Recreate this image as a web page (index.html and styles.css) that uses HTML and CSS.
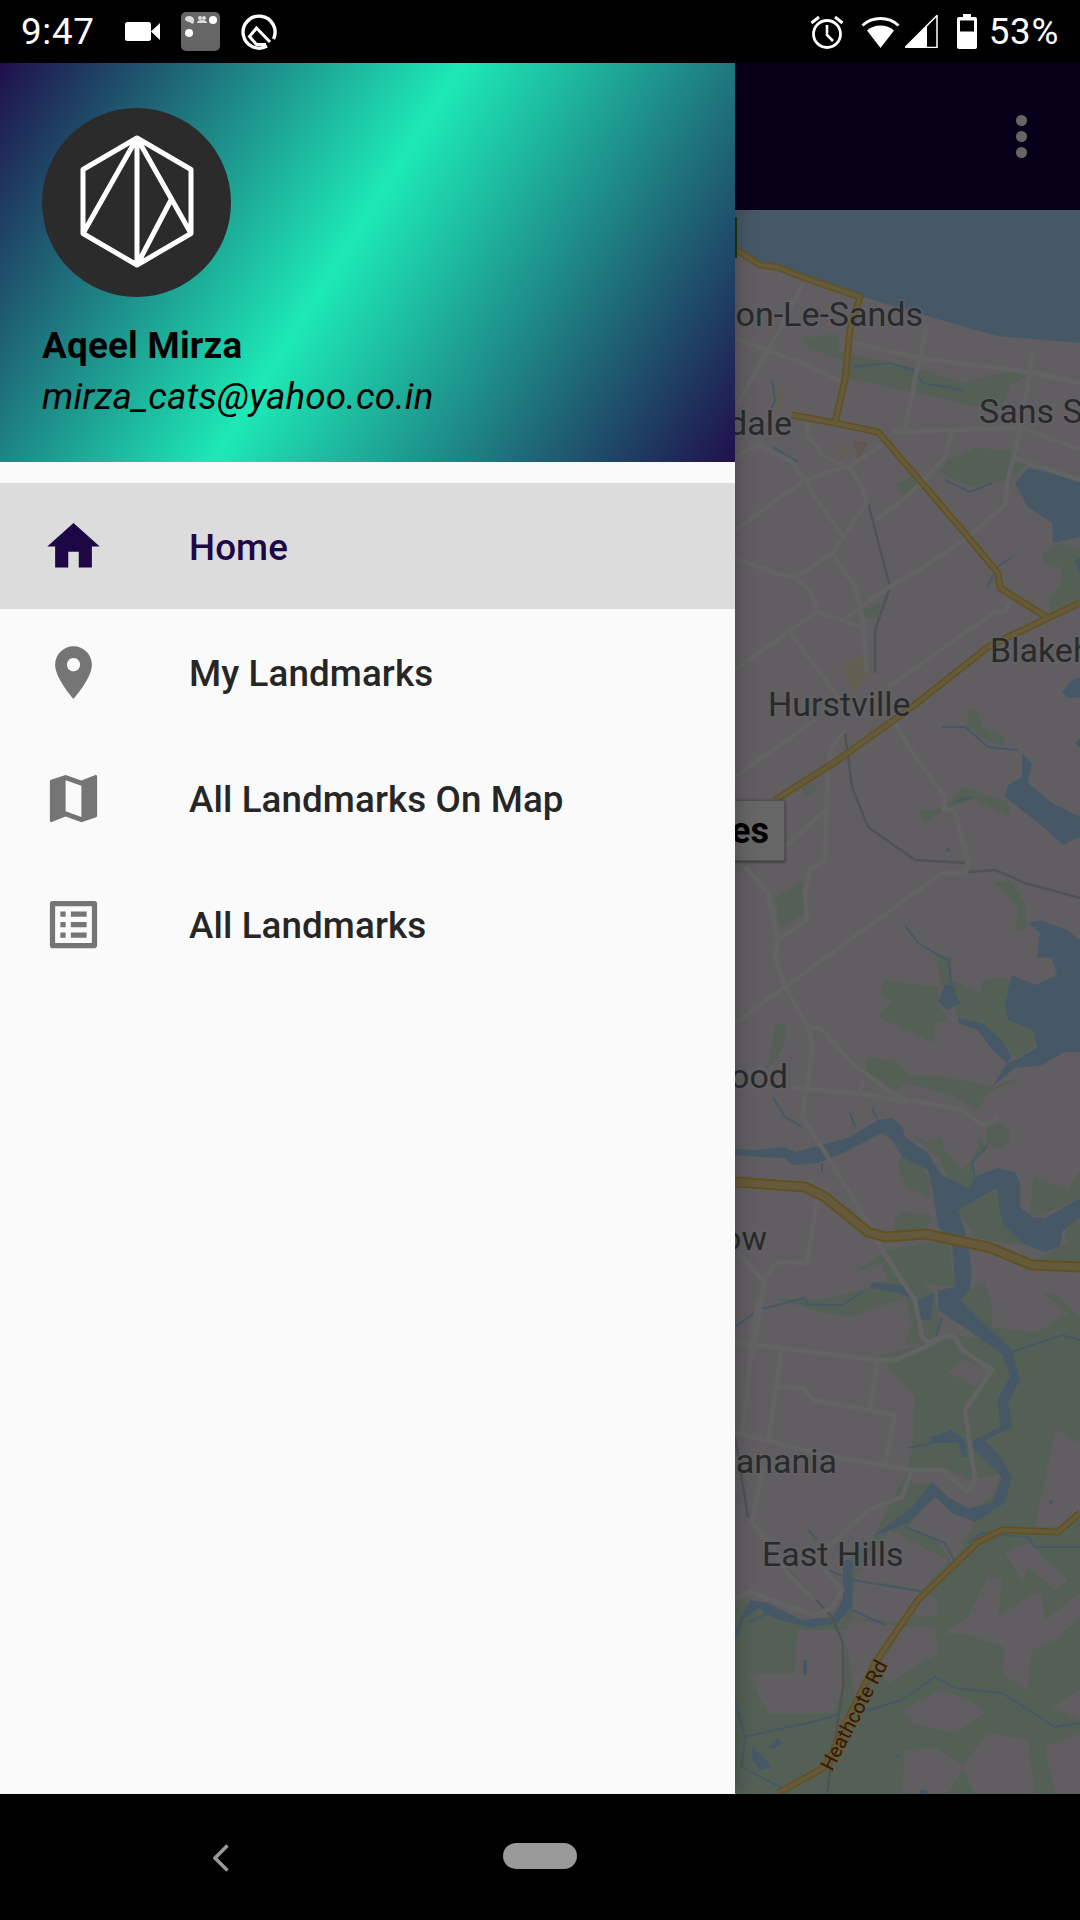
FILE: index.html
```html
<!DOCTYPE html>
<html lang="en">
<head>
    <meta charset="UTF-8">
    <meta name="viewport" content="width=device-width, initial-scale=1.0">
    <title>Landmarks</title>
    <link rel="stylesheet" href="styles.css">
</head>
<body>
    <div class="phone">
        <div class="status-bar">
            <div class="status-left">
                <span class="status-text time">9:47</span>
                <svg class="icon-video" width="36" height="20" viewBox="0 0 36 20">
                    <rect x="0" y="0" width="26" height="19" rx="2.5" fill="#fff"/>
                    <path d="M26 9.5 35 1v17z" fill="#fff"/>
                </svg>
                <svg class="icon-app" width="39" height="39" viewBox="0 0 39 39">
                    <rect width="39" height="39" rx="5" fill="#666"/>
                    <circle cx="32" cy="8" r="4" fill="#fff"/>
                    <circle cx="8" cy="21" r="4" fill="#fff"/>
                    <path d="M4 7c0-2 2-3 4-3s5 1 5 4-1 5-3 3-6-1-6-4z" fill="#ddd"/>
                    <circle cx="19" cy="6" r="2" fill="#ddd"/>
                    <circle cx="23" cy="6" r="2" fill="#ddd"/>
                    <path d="M16 11c0-2 2-3 5-3s5 1 5 3z" fill="#ddd"/>
                </svg>
                <svg class="icon-q" width="36" height="36" viewBox="0 0 36 36">
                    <path d="M26 32A16 16 0 1 1 32.500 25" fill="none" stroke="#fff" stroke-width="3.400"/>
                    <path d="M25 30.500H15.500L8.500 22.500 15.500 14 29 28" fill="none" stroke="#fff" stroke-width="3"/>
                </svg>
            </div>
            <div class="status-right">
                <svg class="icon-alarm" width="34" height="34" viewBox="0 0 34 34">
                    <circle cx="17" cy="19" r="13.5" fill="none" stroke="#fff" stroke-width="2.800"/>
                    <path d="M17 10v10l6 6" fill="none" stroke="#fff" stroke-width="2.600"/>
                    <path d="M9 2 1.500 8M25 2l7.500 6" fill="none" stroke="#fff" stroke-width="3"/>
                </svg>
                <svg class="icon-wifi" width="40" height="33" viewBox="0 0 40 33">
                    <path d="M19.500 33 6 15.500A21 21 0 0 1 33 15.500z" fill="#fff"/>
                    <path d="M1.500 10.500A27 27 0 0 1 37.500 10.500" fill="none" stroke="#fff" stroke-width="3"/>
                </svg>
                <svg class="icon-signal" width="33" height="33" viewBox="0 0 33 33">
                    <path d="M0 33 32 1v32z" fill="none" stroke="#fff" stroke-width="1.500" transform="translate(0 -.5)"/>
                    <path d="M0 33 22 11v22z" fill="#fff"/>
                </svg>
                <svg class="icon-battery" width="20" height="35" viewBox="0 0 20 35">
                    <path d="M6 0h8v3h4a2 2 0 0 1 2 2v28a2 2 0 0 1-2 2H2a2 2 0 0 1-2-2V5a2 2 0 0 1 2-2h4z" fill="#fff"/>
                    <rect x="3" y="6.500" width="14" height="11" fill="#000"/>
                </svg>
                <span class="status-text battery-level">53%</span>
            </div>
        </div>

        <div class="main">
            <div class="app-bar">
                <div class="more-menu">
                    <span class="dot"></span>
                    <span class="dot"></span>
                    <span class="dot"></span>
                </div>
            </div>

            <div class="map">
                <svg class="map-canvas" width="1080" height="1584" viewBox="0 210 1080 1584">
                    <defs>
                        <g id="highways">
                            <polyline points="735,249 760,265 777,267 802,277 860,297 850,329 845,380 835,423"/>
                            <polyline points="792,415 835,423 878,432 922,483 968,537 998,573 1000,588 1048,618 1080,603"/>
                            <polyline points="775,800 835,762 912,707 988,647 1048,618"/>
                            <polyline points="778,1793 825,1767 875,1663 918,1600 978,1542 1002,1530 1058,1532 1080,1513"/>
                        </g>
                        <polyline id="freeway" points="735,1182 805,1187 825,1197 868,1232 885,1237 925,1234 988,1247 1032,1265 1080,1267"/>
                    </defs>

                    <rect class="land" x="0" y="210" width="1080" height="1584"/>

                    <g class="green">
                        <polygon points="878,1355 915,1397 912,1450 905,1475 873,1537 847,1560 845,1620 797,1625 760,1605 735,1600 735,1794 1080,1794 1080,1320 1035,1333 992,1327 985,1340 955,1335 925,1345"/>
                        <polygon points="803,338 837,334 840,352 913,367 963,383 1007,372 1027,376 1010,385 1000,410 970,405 913,392 850,379 843,361 807,347"/>
                        <polygon points="948,460 975,448 1012,450 1030,462 1012,478 1008,480 972,487 938,472"/>
                        <polygon points="895,485 912,477 922,490 905,497"/>
                        <polygon points="1043,553 1060,542 1080,550 1080,600 1050,613 1050,600 1063,580 1060,567 1043,563"/>
                        <polygon points="863,610 882,602 878,617 863,618"/>
                        <polygon points="800,787 813,783 818,788 807,797"/>
                        <polygon points="968,710 977,710 982,727 1005,738 1005,747 985,740 967,727"/>
                        <polygon points="962,787 1008,802 1010,817 975,800 948,807 925,823 918,812 945,807"/>
                        <polygon points="883,980 938,987 938,1003 948,1020 935,1023 933,1043 877,1017 892,1002 882,995"/>
                        <polygon points="935,953 952,957 952,980 980,993 982,980 1008,977 1012,1000 1008,1020 1033,1030 1037,1043 1018,1058 992,1047 978,1023 957,1018 955,1008 942,987"/>
                        <polygon points="995,883 1010,880 1025,903 1025,917 1028,927 1015,932 1018,907"/>
                        <polygon points="775,897 803,882 807,913 780,927"/>
                        <polygon points="775,1025 785,1023 785,1043 775,1060 767,1070"/>
                        <polygon points="867,1057 898,1062 908,1075 948,1077 992,1087 1028,1075 988,1093 978,1110 955,1097 905,1082 898,1092 865,1070"/>
                        <circle cx="998" cy="1136" r="12"/>
                        <polygon points="980,1140 988,1147 973,1163 973,1177 975,1185 965,1188 948,1177 938,1157 905,1130 928,1143 942,1137 943,1147 962,1170 972,1160"/>
                        <polygon points="900,1158 918,1158 930,1180 930,1198 908,1188 898,1170"/>
                        <polygon points="958,1210 998,1188 1008,1223 1022,1237 1032,1247 975,1238"/>
                        <polygon points="1033,1177 1068,1190 1080,1170 1080,1197 1055,1210 1030,1217"/>
                        <polygon points="1063,1222 1080,1222 1080,1262 1030,1262 1068,1243"/>
                        <polygon points="902,1212 932,1215 925,1230 895,1233 895,1218"/>
                        <polygon points="885,1250 948,1240 955,1287 922,1283 902,1283 882,1270"/>
                        <polygon points="852,1273 882,1263 888,1280 862,1290 822,1300 772,1298 825,1313 852,1317 905,1297 912,1327 905,1343 925,1345 940,1330 935,1295 925,1285 880,1255"/>
                        <polygon points="958,1293 985,1283 993,1310 992,1327 1035,1333 1068,1313 1042,1293 1055,1293 1080,1317 1080,1340 985,1340"/>
                    </g>

                    <g class="land">
                        <polygon points="948,1372 962,1360 992,1370 975,1387"/>
                        <polygon points="1055,1430 1080,1443 1080,1513 1058,1527 1035,1527"/>
                        <polygon points="912,1473 942,1467 968,1480 1002,1473 992,1497 968,1510 942,1493 932,1482 912,1485"/>
                        <polygon points="908,1527 935,1495 952,1513 975,1523 952,1563 935,1537"/>
                        <polygon points="1005,1553 1028,1543 1068,1580 1055,1590 1028,1567 1022,1580"/>
                        <polygon points="945,1633 968,1617 988,1577 1002,1580 998,1617 1028,1597 1042,1593 1045,1620 1080,1593 1080,1617 1055,1640 1032,1650 1028,1690 1002,1673 1005,1647 968,1635"/>
                        <polygon points="908,1627 935,1627 938,1653 888,1683 878,1667"/>
                        <polygon points="918,1593 938,1600 938,1615 915,1617"/>
                        <polygon points="902,1710 942,1690 968,1700 985,1713 955,1733 912,1723"/>
                        <polygon points="988,1733 1028,1740 1035,1793 975,1793 962,1767"/>
                        <polygon points="905,1750 935,1747 965,1767 948,1793 902,1793"/>
                        <polygon points="1052,1707 1080,1690 1080,1720"/>
                        <polygon points="1045,1747 1080,1733 1080,1793 1055,1793"/>
                        <polygon points="797,1630 845,1630 845,1677 835,1713 768,1713 748,1673 795,1673"/>
                        <polygon points="852,1620 908,1627 878,1660 855,1700 845,1633"/>
                        <polygon points="855,1577 922,1593 908,1623 852,1617"/>
                        <polygon points="890,1530 948,1560 922,1590 855,1577"/>
                    </g>

                    <g class="water">
                        <polygon points="735,210 1080,210 1080,343 997,336 930,317 860,296 800,274 760,262 735,245"/>
                        <polygon points="1015,483 1028,468 1080,480 1080,537 1053,543 1052,523 1028,507"/>
                        <polygon points="1062,692 1072,680 1080,678 1080,697 1068,698"/>
                        <polygon points="1075,743 1080,738 1080,748"/>
                        <polygon points="1075,560 1080,558 1080,575"/>
                        <polygon points="1022,753 1032,763 1028,783 1052,803 1080,817 1080,837 1063,845 1047,830 1005,797 1008,785 1022,777"/>
                        <polygon points="1028,923 1040,920 1067,930 1080,940 1080,1052 1065,1052 1042,1065 1015,1068 992,1087 1007,1063 1018,1059 1037,1047 1033,1030 1008,1020 1005,1003 1012,975 1035,985 1057,975 1052,958 1037,957 1040,933"/>
                        <polygon points="958,1018 982,1023 1002,1040 1012,1057 1007,1063 992,1050 978,1030 958,1023"/>
                        <polygon points="945,985 952,985 960,1003 948,1010 938,1002"/>
                        <polygon points="735,1149 755,1150 785,1147 795,1152 822,1145 848,1138 878,1120 892,1118 903,1128 905,1137 928,1153 938,1170 942,1175 968,1188 978,1175 998,1168 1015,1172 1020,1183 1020,1207 1032,1217 1045,1218 1080,1198 1080,1218 1063,1230 1060,1247 1045,1252 1022,1243 1002,1223 998,1197 997,1188 958,1210 965,1230 967,1240 972,1270 970,1290 960,1300 1012,1350 1020,1380 1008,1403 1012,1427 985,1440 998,1453 1012,1477 1005,1503 975,1522 952,1513 935,1497 908,1523 872,1537 912,1507 932,1482 948,1497 968,1508 992,1503 1002,1477 978,1453 968,1443 1000,1427 998,1397 1010,1377 1003,1355 968,1330 938,1310 938,1290 955,1287 952,1240 938,1227 932,1187 928,1170 902,1157 892,1140 882,1133 845,1152 818,1163 792,1165 785,1158 755,1157 735,1155"/>
                        <polygon points="872,1282 902,1285 918,1300 935,1293 930,1320 920,1320 915,1300 898,1293 870,1288"/>
                        <polygon points="930,1437 952,1430 965,1440 967,1457 962,1457 958,1443 932,1443"/>
                        <polygon points="735,1630 750,1600 768,1603 802,1620 832,1617 843,1600 843,1560 853,1560 852,1607 838,1623 812,1628 778,1620 758,1608 743,1620 735,1643"/>
                        <polygon points="752,1747 763,1757 772,1767 760,1770 752,1760"/>
                        <polygon points="768,1747 778,1738 782,1743 772,1750"/>
                        <polygon points="803,1660 807,1660 807,1675 803,1675"/>
                        <polygon points="895,1755 900,1753 897,1758"/>
                        <rect x="920" y="1790" width="7" height="4"/>
                        <circle cx="1051" cy="1502" r="2"/>
                        <circle cx="948" cy="850" r="2"/>
                    </g>

                    <polygon class="peach" points="853,440 868,443 858,462"/>
                    <polygon class="sand" points="842,670 852,658 867,657 872,673 852,693"/>
                    <polygon class="sand" points="777,390 785,393 778,413"/>
                    <polygon class="sand" points="835,453 848,445 842,460"/>

                    <g class="stream">
                        <polyline points="772,380 775,400 770,413"/>
                        <polyline points="853,367 890,363 913,370 923,383 963,390"/>
                        <polyline points="773,447 798,462"/>
                        <polyline points="945,480 970,492 992,483"/>
                        <polyline points="987,588 997,567 1012,557"/>
                        <polyline points="942,727 965,727 988,747 1018,750"/>
                        <polyline points="955,802 972,797"/>
                        <polyline points="905,925 918,943 935,953 948,960 952,987"/>
                        <polyline points="773,1097 785,1117 802,1127"/>
                        <polyline points="850,1113 855,1127"/>
                        <polyline points="872,1108 877,1118"/>
                        <polyline points="822,1163 822,1172"/>
                        <polyline points="975,1177 972,1162 988,1145"/>
                        <polyline points="735,1327 758,1310 785,1303 805,1298 808,1305 842,1305 863,1292"/>
                        <polyline points="935,1340 942,1317"/>
                        <polyline points="1008,1353 1062,1335 1080,1340"/>
                        <polyline points="908,1448 932,1443"/>
                        <polyline points="905,1527 945,1543 955,1562"/>
                        <polyline points="968,1543 982,1533 1028,1537 1035,1547 1080,1547"/>
                        <polyline points="808,1530 817,1540"/>
                        <polyline points="828,1570 853,1580 925,1592"/>
                        <polyline points="852,1610 885,1625"/>
                        <polyline points="750,1622 768,1613"/>
                        <polyline points="862,1712 902,1700 935,1677 955,1688 1002,1693 1055,1727 1080,1723"/>
                        <polyline points="735,1700 745,1737 775,1730 812,1722 837,1715"/>
                        <polyline points="745,1737 742,1767 785,1790"/>
                    </g>

                    <g class="rail">
                        <polyline points="868,503 890,587 875,630 875,673"/>
                        <polyline points="845,733 852,787 868,827 915,860 965,863"/>
                        <polyline points="968,872 995,870 1025,883 1080,898"/>
                        <polyline points="735,1437 748,1517"/>
                        <polyline points="788,1570 832,1617 843,1643 843,1687 827,1793"/>
                    </g>

                    <g class="roads">
                        <polyline points="803,283 780,329 737,405"/>
                        <polyline points="927,325 915,380 905,430"/>
                        <polyline points="735,338 807,365 840,381"/>
                        <polyline points="853,343 920,358 1030,372 1080,383"/>
                        <polyline points="735,530 805,480 852,465 885,443"/>
                        <polyline points="892,432 1022,428 1080,450"/>
                        <polyline points="1015,458 1080,480"/>
                        <polyline points="952,432 945,457 922,483 898,503 877,520"/>
                        <polyline points="1033,350 1022,423 1008,480 1005,505 968,537 938,558 915,572 888,588 842,620 817,612 788,632 735,670"/>
                        <polyline points="842,620 862,628"/>
                        <polyline points="735,457 758,445 792,462 845,540"/>
                        <polyline points="808,423 807,435 825,457 850,468 863,490 867,503 848,530 832,553 795,578"/>
                        <polyline points="832,553 855,587 863,620 867,673"/>
                        <polyline points="735,558 772,572 795,578 810,590 818,612"/>
                        <polyline points="790,633 838,697"/>
                        <polyline points="735,777 815,720"/>
                        <polyline points="888,687 995,612 1005,612 1010,602"/>
                        <polyline points="895,723 915,757 945,797 943,808 955,812 968,863 965,873 942,873 785,987 735,1023"/>
                        <polyline points="845,730 832,747 828,763 825,860 810,870 805,893 807,920 778,940"/>
                        <polyline points="785,847 825,810"/>
                        <polyline points="745,867 768,893 778,940 775,957 785,987 808,1027 813,1047 802,1117 828,1157 868,1223 882,1250 915,1300 922,1337 928,1342 948,1335 955,1337 962,1350 992,1370 965,1410 975,1480 968,1492 942,1470 912,1470 835,1457 735,1433"/>
                        <polyline points="807,1025 822,1030 852,1063 898,1098 962,1110 982,1125 998,1118"/>
                        <polyline points="792,1087 868,1095 908,1103"/>
                        <polyline points="863,1080 860,1092"/>
                        <polyline points="818,1193 807,1263 778,1262 765,1277 752,1360"/>
                        <polyline points="738,1253 763,1280"/>
                        <polyline points="735,1342 782,1348 875,1360 895,1360 925,1347 948,1335"/>
                        <polyline points="757,1300 742,1433"/>
                        <polyline points="782,1348 768,1443"/>
                        <polyline points="878,1360 870,1408"/>
                        <polyline points="778,1387 803,1388 813,1400 895,1415 885,1465"/>
                        <polyline points="912,1470 902,1497 868,1510 828,1547"/>
                        <polyline points="763,1467 752,1522 772,1547 785,1570 815,1600"/>
                        <polyline points="735,1597 752,1592 778,1603 815,1615 832,1608 842,1590 825,1570"/>
                    </g>

                    <g class="highway-edge"><use href="#highways"/></g>
                    <g class="highway-core"><use href="#highways"/></g>
                    <g class="freeway-edge"><use href="#freeway"/></g>
                    <g class="freeway-core"><use href="#freeway"/></g>

                    <rect class="road-sign" x="735" y="217" width="2" height="41"/>

                    <text class="map-label" x="923" y="326" text-anchor="end">Brighton-Le-Sands</text>
                    <text class="map-label" x="792" y="435" text-anchor="end">Rockdale</text>
                    <text class="map-label" x="979" y="423">Sans Souci</text>
                    <text class="map-label" x="990" y="662">Blakehurst</text>
                    <text class="map-label" x="768" y="716">Hurstville</text>
                    <text class="map-label" x="788" y="1088" text-anchor="end">Riverwood</text>
                    <text class="map-label" x="767" y="1250" text-anchor="end">Padstow</text>
                    <text class="map-label" x="837" y="1473" text-anchor="end">Panania</text>
                    <text class="map-label" x="762" y="1566">East Hills</text>
                    <text class="road-label" transform="translate(832 1772) rotate(-62.400)">Heathcote Rd</text>
                </svg>
                <button class="map-button">Places</button>
            </div>

            <div class="scrim"></div>

            <div class="drawer">
                <div class="drawer-header">
                    <div class="avatar">
                        <svg width="122" height="138" viewBox="0 0 122 138">
                            <path d="M61 4 115 35.500V99.500L61 131 7 99.500V35.500Z M61 4V131 M61 4 7 99.500 M61 4 115 99.500 M95 66 61 131" fill="none" stroke="#fff" stroke-width="5" stroke-linejoin="round"/>
                        </svg>
                    </div>
                    <div class="user-name">Aqeel Mirza</div>
                    <div class="user-email">mirza_cats@yahoo.co.in</div>
                </div>
                <ul class="nav-menu">
                    <li class="nav-item active">
                        <svg class="nav-icon" viewBox="0 0 24 24"><path d="M10 20v-6h4v6h5v-8h3L12 3 2 12h3v8z"/></svg>
                        <span>Home</span>
                    </li>
                    <li class="nav-item">
                        <svg class="nav-icon" viewBox="0 0 24 24"><path d="M12 2C8.130 2 5 5.130 5 9c0 5.250 7 13 7 13s7-7.750 7-13c0-3.870-3.130-7-7-7zm0 9.500c-1.380 0-2.500-1.120-2.500-2.500s1.120-2.500 2.500-2.500 2.500 1.120 2.500 2.500-1.120 2.500-2.500 2.500z"/></svg>
                        <span>My Landmarks</span>
                    </li>
                    <li class="nav-item">
                        <svg class="nav-icon" viewBox="0 0 24 24"><path d="M20.500 3l-.16.03L15 5.100 9 3 3.360 4.900c-.21.070-.36.250-.36.480V20.500c0 .280.220.500.500.500l.16-.03L9 18.900l6 2.100 5.640-1.900c.21-.07.36-.25.36-.48V3.500c0-.28-.22-.5-.5-.5zM15 19l-6-2.110V5l6 2.110V19z"/></svg>
                        <span>All Landmarks On Map</span>
                    </li>
                    <li class="nav-item">
                        <svg class="nav-icon" viewBox="0 0 24 24"><path d="M19 5v14H5V5h14m1.100-2H3.900c-.5 0-.9.400-.9.900v16.200c0 .400.400.900.900.900h16.200c.400 0 .900-.5.900-.9V3.900c0-.5-.5-.9-.9-.9zM11 7h6v2h-6V7zm0 4h6v2h-6v-2zm0 4h6v2h-6zM7 7h2v2H7zm0 4h2v2H7zm0 4h2v2H7z"/></svg>
                        <span>All Landmarks</span>
                    </li>
                </ul>
            </div>
        </div>

        <div class="nav-bar">
            <svg class="nav-back" width="16" height="28" viewBox="0 0 16 28">
                <path d="M14.500 1.500 2 14l12.500 12.500" fill="none" stroke="#999" stroke-width="3.500"/>
            </svg>
            <div class="nav-home"></div>
        </div>
    </div>
</body>
</html>
```

FILE: styles.css
```css
body {
    margin: 0;
    background-color: #000;
    font-family: Roboto, "Liberation Sans", sans-serif;
}

.phone {
    width: 1080px;
    height: 1920px;
    display: flex;
    flex-direction: column;
    overflow: hidden;
}

/* status bar */
.status-bar {
    height: 63px;
    flex-shrink: 0;
    display: flex;
    justify-content: space-between;
    align-items: center;
    padding: 0 21px 0 21px;
    color: #fff;
}

.status-left,
.status-right {
    display: flex;
    align-items: center;
}

.status-text {
    font-size: 36.75px;
    letter-spacing: 0.7px;
    line-height: 63px;
}

.icon-video {
    margin-left: 30px;
}

.icon-app {
    margin-left: 20px;
}

.icon-q {
    margin-left: 21px;
}

.icon-wifi {
    margin-left: 17px;
}

.icon-signal {
    margin-left: 4px;
}

.icon-battery {
    margin-left: 19px;
}

.battery-level {
    margin-left: 12px;
}

/* app content */
.main {
    flex: 1;
    position: relative;
    display: flex;
    flex-direction: column;
    min-height: 0;
}

.app-bar {
    height: 147px;
    flex-shrink: 0;
    background-color: #160040;
    display: flex;
    justify-content: flex-end;
    align-items: center;
    padding-right: 53px;
}

.more-menu {
    display: flex;
    flex-direction: column;
    gap: 5px;
}

.dot {
    width: 11px;
    height: 11px;
    border-radius: 50%;
    background-color: #fff;
}

.map {
    flex: 1;
    position: relative;
    background-color: #f0ecf0;
    overflow: hidden;
}

.map-canvas {
    display: block;
}

.land {
    fill: #f0ecf0;
}

.water {
    fill: #aedcff;
}

.green {
    fill: #d2f0d8;
}

.peach {
    fill: #f8d8cc;
}

.sand {
    fill: #f6eccc;
}

.stream,
.rail,
.roads,
.highway-edge,
.highway-core,
.freeway-edge,
.freeway-core {
    fill: none;
    stroke-linejoin: round;
}

.stream {
    stroke: #aedcff;
    stroke-width: 2px;
}

.rail {
    stroke: #c8ccd0;
    stroke-width: 2.5px;
}

.roads {
    stroke: #faf8fa;
    stroke-width: 4.5px;
}

.highway-edge {
    stroke: #f2c850;
    stroke-width: 7px;
}

.highway-core {
    stroke: #fde293;
    stroke-width: 4px;
}

.freeway-edge {
    stroke: #f2c850;
    stroke-width: 11px;
}

.freeway-core {
    stroke: #fde293;
    stroke-width: 7px;
}

.road-sign {
    fill: #4a8a30;
}

.map-label {
    font-size: 34px;
    fill: #666a70;
    stroke: #fff;
    stroke-width: 3px;
    stroke-opacity: 0.5;
    paint-order: stroke;
}

.road-label {
    font-size: 20px;
    fill: #8a4000;
    stroke: #f6de94;
    stroke-width: 2px;
    paint-order: stroke;
}

.map-button {
    position: absolute;
    right: 295px;
    top: 590px;
    height: 61px;
    padding: 0 15px;
    background-color: #fff;
    border: 1px solid #ccc;
    box-shadow: 0 1px 3px rgba(0, 0, 0, 0.5);
    font-family: Roboto, sans-serif;
    font-size: 36px;
    font-weight: 700;
    color: #000;
}

.scrim {
    position: absolute;
    left: 0;
    top: 0;
    right: 0;
    bottom: 0;
    background-color: rgba(0, 0, 0, 0.6);
}

/* drawer */
.drawer {
    position: absolute;
    left: 0;
    top: 0;
    bottom: 0;
    width: 735px;
    background-color: #fafafa;
    box-shadow: 0 0 20px rgba(0, 0, 0, 0.3);
}

.drawer-header {
    height: 399px;
    box-sizing: border-box;
    padding: 45px 42px 0;
    background: linear-gradient(122deg, #20104c 0%, #1de9b6 47%, #20104c 100%);
    color: #000;
    font-size: 36.75px;
}

.avatar {
    width: 189px;
    height: 189px;
    border-radius: 50%;
    background-color: #2b2b2b;
    display: flex;
    justify-content: center;
    align-items: center;
}

.user-name {
    margin-top: 27px;
    font-weight: 700;
    line-height: 43px;
    letter-spacing: 0.25px;
}

.user-email {
    margin-top: 8px;
    font-style: italic;
    letter-spacing: 0.17px;
    line-height: 43px;
}

.nav-menu {
    list-style: none;
    margin: 21px 0 0;
    padding: 0;
}

.nav-item {
    height: 126px;
    display: flex;
    align-items: center;
    padding-left: 42px;
    font-size: 36.75px;
    font-weight: 500;
    letter-spacing: 0.1px;
    color: #262626;
}

.nav-item span {
    padding-top: 2px;
}

.nav-item.active {
    background-color: #dcdcdc;
    color: #1d0845;
}

.nav-icon {
    width: 63px;
    height: 63px;
    margin-right: 84px;
    fill: #757575;
}

.nav-item.active .nav-icon {
    fill: #1d0845;
}

/* bottom navigation */
.nav-bar {
    height: 126px;
    flex-shrink: 0;
    position: relative;
    display: flex;
    justify-content: center;
    align-items: center;
}

.nav-back {
    position: absolute;
    left: 213px;
    top: 50px;
}

.nav-home {
    width: 74px;
    height: 26px;
    margin-top: -3px;
    border-radius: 13px;
    background-color: #9a9a9a;
}
```
